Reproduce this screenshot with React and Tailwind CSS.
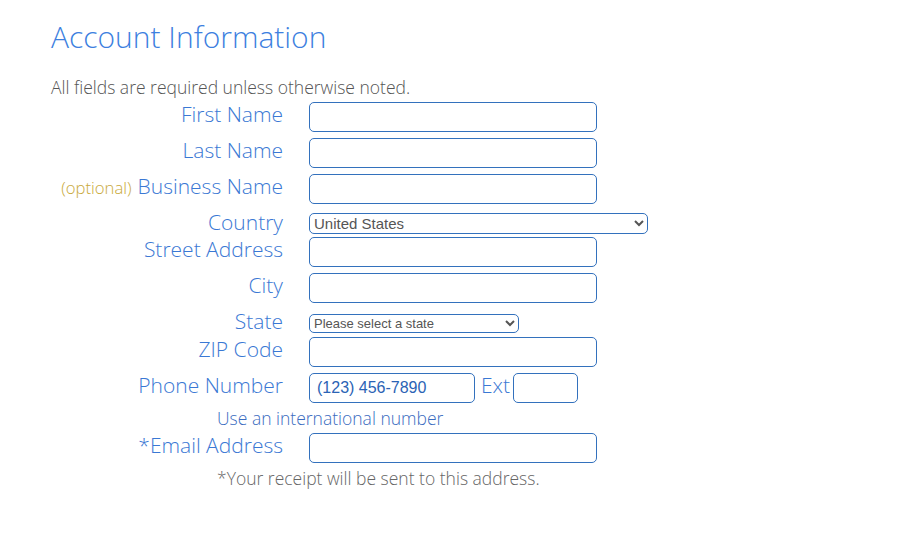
import React from "react";

const labelCls =
  "w-[232px] shrink-0 text-right text-[21px] leading-[24px] font-light text-[#3a78d4] pr-0";
const inputCls =
  "block h-[30px] w-[288px] rounded-[5px] border border-[#3371bd] bg-white px-1 text-[16px] outline-none";

function Row({ label, children, h = 36, labelMt = 0, pre }) {
  return (
    <div className="flex items-start" style={{ height: h }}>
      <div className={labelCls} style={{ marginTop: labelMt }}>
        {pre}
        {label}
      </div>
      <div className="ml-[26px]">{children}</div>
    </div>
  );
}

export default function App() {
  return (
    <div
      className="min-h-[537px] w-[901px] bg-white pl-[51px] pt-[17px]"
      style={{ fontFamily: '"Open Sans", sans-serif' }}
    >
      <h1 className="text-[30px] font-light leading-[40px] text-[#3d7fe0]">
        Account Information
      </h1>
      <p className="mt-[18px] text-[17.5px] font-light leading-[24px] text-[#555]">
        All fields are required unless otherwise noted.
      </p>
      <div className="mt-[3px]">
        <Row label="First Name">
          <input className={inputCls} />
        </Row>
        <Row label="Last Name">
          <input className={inputCls} />
        </Row>
        <Row
          label="Business Name"
          pre={
            <span className="mr-[6px] text-[16.7px] text-[#c9a93a]">(optional)</span>
          }
        >
          <input className={inputCls} />
        </Row>
        <Row label="Country" h={27}>
          <select
            className="mt-[3px] block h-[21px] w-[339px] rounded-[5px] border border-[#3371bd] bg-white text-[15px] leading-[19px] text-[#555] outline-none"
            style={{ fontFamily: '"Liberation Sans", Arial, sans-serif' }}
            defaultValue="US"
          >
            <option value="US">United States</option>
          </select>
        </Row>
        <Row label="Street Address">
          <input className={inputCls} />
        </Row>
        <Row label="City">
          <input className={inputCls} />
        </Row>
        <Row label="State" h={28}>
          <select
            className="mt-[5px] block h-[19px] w-[210px] rounded-[5px] border border-[#3371bd] bg-white text-[13px] leading-[17px] text-[#555] outline-none"
            style={{ fontFamily: '"Liberation Sans", Arial, sans-serif' }}
            defaultValue=""
          >
            <option value="">Please select a state</option>
          </select>
        </Row>
        <Row label="ZIP Code">
          <input className={inputCls} />
        </Row>
        <Row label="Phone Number" h={30}>
          <div className="flex items-start">
            <input
              className="block h-[30px] w-[166px] rounded-[5px] border border-[#3371bd] bg-white px-[7px] text-[16px] text-[#2b63b5] outline-none"
              style={{ fontFamily: '"Liberation Sans", Arial, sans-serif' }}
              defaultValue="(123) 456-7890"
            />
            <span className="ml-[6px] text-[21px] font-light leading-[24px] text-[#3a78d4]">
              Ext
            </span>
            <input className="ml-[3px] block h-[30px] w-[65px] rounded-[5px] border border-[#3371bd] bg-white outline-none" />
          </div>
        </Row>
        <div className="flex h-[30px] items-center pl-[166px] text-[17.5px] font-light text-[#3b6cbf]">
          Use an international number
        </div>
        <Row label="*Email Address" h={30}>
          <input className={inputCls} />
        </Row>
        <div className="flex h-[30px] items-center pl-[166px] text-[17.5px] font-light text-[#666]">
          *Your receipt will be sent to this address.
        </div>
      </div>
    </div>
  );
}
